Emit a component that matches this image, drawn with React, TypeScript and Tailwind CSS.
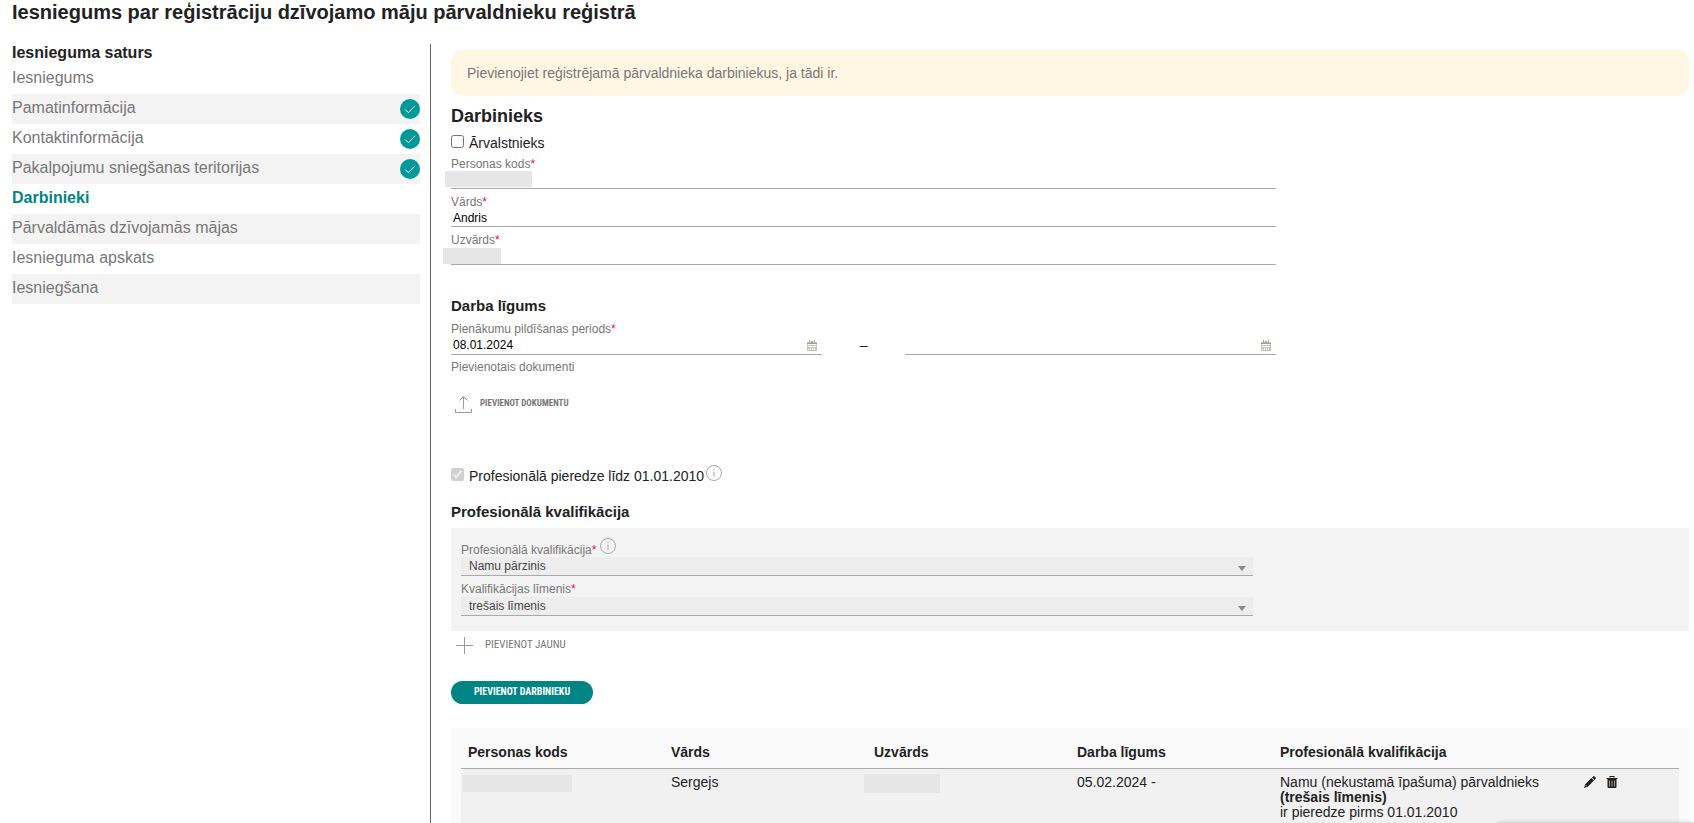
import React from "react";

const steps = [
  { label: "Iesniegums", done: false },
  { label: "Pamatinformācija", done: true },
  { label: "Kontaktinformācija", done: true },
  { label: "Pakalpojumu sniegšanas teritorijas", done: true },
  { label: "Darbinieki", done: false, active: true },
  { label: "Pārvaldāmās dzīvojamās mājas", done: false },
  { label: "Iesnieguma apskats", done: false },
  { label: "Iesniegšana", done: false },
];

function CheckBadge() {
  return (
    <svg width="20" height="20" viewBox="0 0 20 20" className="shrink-0" aria-hidden="true">
      <circle cx="10" cy="10" r="10" fill="#009999" />
      <path d="M5.3 10.6 8.4 13.7 15 6.8" fill="none" stroke="#fff" strokeWidth="1" />
    </svg>
  );
}

function InfoIcon() {
  return (
    <svg width="16" height="16" viewBox="0 0 16 16" className="shrink-0" aria-hidden="true">
      <circle cx="8" cy="8" r="7.5" fill="none" stroke="#aaa" />
      <path d="M8 6.5V12M8 4V5.2" stroke="#aaa" />
    </svg>
  );
}

function CalendarIcon() {
  return (
    <svg width="12" height="12" viewBox="0 0 12 12" aria-hidden="true">
      <path d="M1 2h10v9H1z" fill="#c9c2b9" />
      <path d="M1 3h10v1H1z" fill="#a69c8f" />
      <path d="M2 4h8v1H2zM2 6h8v1H2zM2 9h1v1H2zM4 8h1v2H4zM6 8h1v2H6zM8 8h1v2H8z" fill="#fff" />
      <path d="M3 0h1v3H3zM5 1h2v2H5zM8 0h1v3H8z" fill="#b0a79b" />
    </svg>
  );
}

function PencilIcon() {
  return (
    <svg width="12" height="12" viewBox="0 0 12 12" aria-hidden="true">
      <path d="M8 1.6 9.2.4a1 1 0 0 1 1.4 0l1 1a1 1 0 0 1 0 1.4l-1.2 1.2zM7.4 2l2.6 2.6-6.2 6.2L0 12l1.2-3.8z" fill="#222" />
      <path d="M1.7 9.2 2.8 10.3" stroke="#ddd" strokeWidth=".8" />
    </svg>
  );
}

function TrashIcon() {
  return (
    <svg width="12" height="12" viewBox="0 0 12 12" fill="none" aria-hidden="true">
      <path d="M4 1.5V.5h4v1M.5 2.5h11" stroke="#222" strokeWidth="1.2" />
      <path d="M1.5 3h9v8a1 1 0 0 1-1 1h-7a1 1 0 0 1-1-1z" fill="#222" />
      <path d="M3.5 4.5v6M6 4.5v6M8.5 4.5v6" stroke="#b9a692" strokeWidth=".9" />
    </svg>
  );
}

function Label({ htmlFor, children }: { htmlFor: string; children: React.ReactNode }) {
  return (
    <label htmlFor={htmlFor} className="block text-[12px] leading-4 text-[#777]">
      {children}
      <span className="text-[#e0143c]">*</span>
    </label>
  );
}

function Field({ id, label, value, mask }: { id: string; label: string; value?: string; mask?: string }) {
  return (
    <div className="relative h-[38px] border-b border-[#aaa] pt-[5px]">
      <Label htmlFor={id}>{label}</Label>
      <input id={id} defaultValue={value} className="block h-4 w-full bg-transparent px-0.5 text-[12px] text-black outline-none" />
      {mask && <span className={mask} />}
    </div>
  );
}

function DateField({ id, label, value }: { id: string; label: string; value?: string }) {
  return (
    <div className="flex h-[18px] w-[45%] items-start border-b border-[#aaa] pr-1">
      <input id={id} aria-label={label} defaultValue={value} className="h-4 min-w-0 flex-1 bg-transparent px-0.5 text-[12px] text-black outline-none" />
      <button type="button" aria-label="Kalendārs" className="pt-[3px]">
        <CalendarIcon />
      </button>
    </div>
  );
}

function Choice({ id, options }: { id: string; options: string[] }) {
  return (
    <div className="relative h-[19px] border-b border-[#aaa] bg-[#ededed]">
      <select id={id} className="block h-[18px] w-full appearance-none bg-transparent px-2 text-[12px] text-[#444] outline-none">
        {options.map((o) => (
          <option key={o}>{o}</option>
        ))}
      </select>
      <svg width="8" height="5" viewBox="0 0 8 5" className="pointer-events-none absolute right-[7px] bottom-1" aria-hidden="true">
        <path d="M0 0h8L4 5z" fill="#888" />
      </svg>
    </div>
  );
}

export default function App() {
  return (
    <div className="h-screen overflow-hidden bg-white pr-[5px] pl-3 font-['Liberation_Sans',Arial,sans-serif] text-[14px] text-[#222]">
      <h1 className="h-11 text-[20px] leading-6 font-bold">Iesniegums par reģistrāciju dzīvojamo māju pārvaldnieku reģistrā</h1>
      <div className="flex">
        <aside className="w-[408px] shrink-0">
          <h2 className="h-5 text-[16px] leading-[18px] font-bold">Iesnieguma saturs</h2>
          <nav>
            {steps.map((s) => (
              <a key={s.label} href="#" className="flex h-[30px] justify-between pt-0.5 text-[16px] leading-6 even:bg-[#f3f3f3]">
                <span className={s.active ? "font-bold text-[#008484]" : "text-[#777]"}>{s.label}</span>
                {s.done && (
                  <span className="pt-[3px]">
                    <CheckBadge />
                  </span>
                )}
              </a>
            ))}
          </nav>
        </aside>

        <main className="ml-2.5 min-w-0 flex-1 border-l border-[#666] pt-1.5 pl-5">
          <div className="h-[46px] rounded-xl bg-[#fff6e3] px-4 leading-[46px] text-[#777]">
            Pievienojiet reģistrējamā pārvaldnieka darbiniekus, ja tādi ir.
          </div>

          <h2 className="pt-2 pb-1 text-[18px] leading-6 font-bold">Darbinieks</h2>
          <label className="flex h-[19px] items-start gap-[5px] leading-[22px]">
            <input type="checkbox" className="mt-[3px] size-[13px]" />
            Ārvalstnieks
          </label>
          <div className="w-2/3">
            <Field id="kods" label="Personas kods" mask="absolute -left-1.5 top-5 h-4 w-[87px] bg-[#e6e6e6]" />
            <Field id="vards" label="Vārds" value="Andris" />
            <Field id="uzvards" label="Uzvārds" mask="absolute -left-2 top-[21px] h-4 w-[58px] bg-[#e6e6e6]" />

            <h3 className="mt-[31px] text-[15px] leading-5 font-bold">Darba līgums</h3>
            <div className="mt-[5px]">
              <Label htmlFor="no">Pienākumu pildīšanas periods</Label>
              <div className="flex items-start justify-between">
                <DateField id="no" label="Periods no" value="08.01.2024" />
                <span className="leading-4">–</span>
                <DateField id="lidz" label="Periods līdz" />
              </div>
            </div>
          </div>
          <p className="mt-1 text-[12px] leading-4 text-[#777]">Pievienotais dokumenti</p>
          <button type="button" className="mt-5 ml-1 flex h-[18px] items-center gap-2 font-['Roboto_Condensed','Open_Sans_Condensed',Roboto,sans-serif] text-[9px] font-bold text-[#777]">
            <svg width="17" height="18" viewBox="0 0 17 18" fill="none" stroke="#999" aria-hidden="true">
              <path d="M8.5 14V1.5M4.5 5.5l4-4 4 4M.5 14v3.5h16V14" />
            </svg>
            PIEVIENOT DOKUMENTU
          </button>

          <div className="mt-[52px] flex h-5 gap-0.5">
            <label className="flex items-start gap-[5px] leading-[22px]">
              <input type="checkbox" checked disabled readOnly className="mt-[3px] size-[13px]" />
              Profesionālā pieredze līdz 01.01.2010
            </label>
            <InfoIcon />
          </div>

          <h3 className="mt-[17px] text-[15px] leading-5 font-bold">Profesionālā kvalifikācija</h3>
          <section className="mt-1.5 h-[103px] bg-[#f3f3f3] px-2.5 pt-2.5">
            <div className="w-[65%]">
              <div className="flex h-[19px] gap-1">
                <div className="pt-1">
                  <Label htmlFor="kval">Profesionālā kvalifikācija</Label>
                </div>
                <InfoIcon />
              </div>
              <Choice id="kval" options={["Namu pārzinis"]} />
              <div className="pt-[5px]">
                <Label htmlFor="limenis">Kvalifikācijas līmenis</Label>
              </div>
              <Choice id="limenis" options={["trešais līmenis"]} />
            </div>
          </section>
          <button type="button" className="mt-[5px] ml-[5px] flex h-[18px] items-center gap-3 font-['Roboto_Condensed','Open_Sans_Condensed',Roboto,sans-serif] text-[11px] text-[#777]">
            <svg width="17" height="17" viewBox="0 0 17 17" stroke="#999" aria-hidden="true">
              <path d="M8.5 0v17M0 8.5h17" />
            </svg>
            PIEVIENOT JAUNU
          </button>
          <button type="button" className="mt-[27px] block h-[23px] w-[142px] rounded-full bg-[#008484] pb-0.5 font-['Roboto_Condensed','Open_Sans_Condensed',Roboto,sans-serif] text-[10px] font-bold text-white">
            PIEVIENOT DARBINIEKU
          </button>

          <div className="mt-6 bg-[#fafafa] px-2.5 pt-2">
            <table className="w-full table-fixed border-collapse text-left leading-[15px]">
              <thead>
                <tr className="h-8 border-b border-[#aaa]">
                  <th className="px-[7px] pt-0.5">Personas kods</th>
                  <th className="px-[7px] pt-0.5">Vārds</th>
                  <th className="px-[7px] pt-0.5">Uzvārds</th>
                  <th className="px-[7px] pt-0.5">Darba līgums</th>
                  <th className="px-[7px] pt-0.5">Profesionālā kvalifikācija</th>
                  <th aria-label="Darbības" />
                </tr>
              </thead>
              <tbody>
                <tr className="h-20 bg-[#f1f1f1] align-top">
                  <td className="px-0.5 pt-1.5">
                    <div className="h-[17px] w-[109px] bg-[#e6e6e6]" />
                  </td>
                  <td className="px-[7px] pt-1.5">Sergejs</td>
                  <td className="pt-[5px]">
                    <div className="-ml-[3px] h-[19px] w-[76px] bg-[#e6e6e6]" />
                  </td>
                  <td className="px-[7px] pt-1.5">05.02.2024 -</td>
                  <td className="px-[7px] pt-1.5 whitespace-nowrap">
                    Namu (nekustamā īpašuma) pārvaldnieks
                    <br />
                    <b>(trešais līmenis)</b>
                    <br />
                    ir pieredze pirms 01.01.2010
                  </td>
                  <td className="pt-[7px] pl-27">
                    <div className="flex gap-2.5">
                      <button type="button" aria-label="Labot">
                        <PencilIcon />
                      </button>
                      <button type="button" aria-label="Dzēst">
                        <TrashIcon />
                      </button>
                    </div>
                  </td>
                </tr>
              </tbody>
            </table>
          </div>
        </main>
      </div>
      <div className="fixed right-0 -bottom-10 h-10 w-[196px] shadow-[0_0_4px_rgba(0,0,0,0.25)]" />
    </div>
  );
}
